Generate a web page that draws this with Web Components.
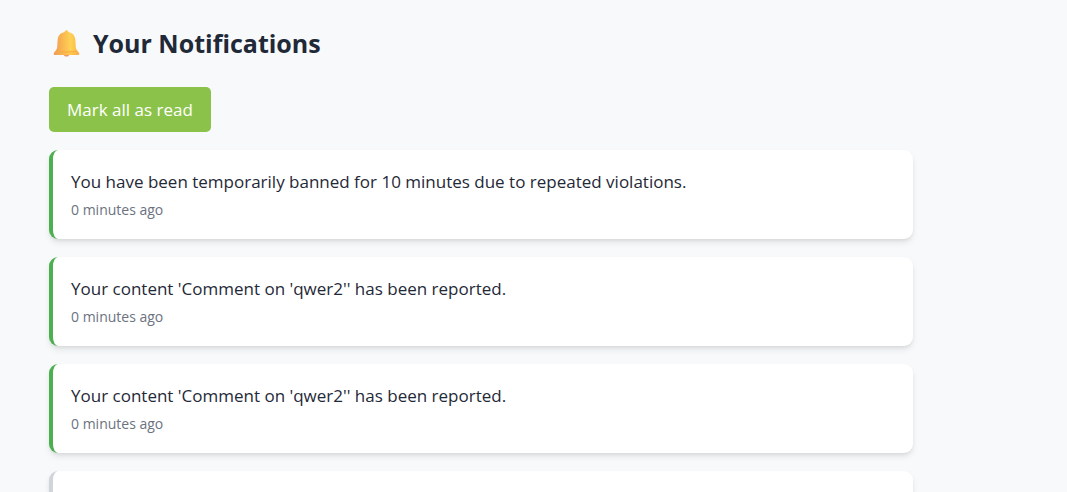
<!DOCTYPE html>
<html lang="en">
<head>
<meta charset="utf-8">
<meta name="viewport" content="width=device-width, initial-scale=1">
<title>Your Notifications</title>
<style>
  body { margin: 0; background: #f8f9fb; color: #1f2937; font-family: "Open Sans", "Noto Sans", sans-serif; font-size: 17px; }
</style>
</head>
<body>
<notifications-page>
  <page-title>Your Notifications</page-title>
  <action-button>Mark all as read</action-button>
  <notification-list>
    <notification-card unread time="0 minutes ago">You have been temporarily banned for 10 minutes due to repeated violations.</notification-card>
    <notification-card unread time="0 minutes ago">Your content 'Comment on 'qwer2'' has been reported.</notification-card>
    <notification-card unread time="0 minutes ago">Your content 'Comment on 'qwer2'' has been reported.</notification-card>
    <notification-card></notification-card>
  </notification-list>
</notifications-page>
<script>
  class ShadowElement extends HTMLElement {
    constructor() {
      super();
      this.attachShadow({ mode: "open" }).innerHTML = this.constructor.markup;
    }
  }

  customElements.define("notifications-page", class extends ShadowElement {
    static markup = `
      <style>
        :host { display: block; }
        main { display: flex; flex-direction: column; align-items: flex-start; gap: 18px; max-width: 864px; padding: 18px 49px; }
        ::slotted(notification-list) { align-self: stretch; }
      </style>
      <main><slot></slot></main>`;
  });

  customElements.define("page-title", class extends ShadowElement {
    static markup = `
      <style>
        :host { display: block; }
        h1 { display: flex; align-items: center; gap: 12px; margin: 0; padding: 0 0 0 4px; font-size: 25px; line-height: 51px; font-weight: 700; }
        svg { width: 28px; height: 28px; flex: none; }
      </style>
      <h1>
        <svg viewBox="0 0 28 28" aria-hidden="true">
          <defs>
            <linearGradient id="body" x1="0" x2="1" y1="0" y2="0">
              <stop offset="0" stop-color="#f09c55"/>
              <stop offset=".35" stop-color="#f9b950"/>
              <stop offset=".68" stop-color="#ffd155"/>
              <stop offset="1" stop-color="#f9ba45"/>
            </linearGradient>
            <linearGradient id="rim" x1="0" x2="1" y1="0" y2="0">
              <stop offset="0" stop-color="#f09c55"/>
              <stop offset=".65" stop-color="#ffc94c"/>
              <stop offset="1" stop-color="#f5ad4c"/>
            </linearGradient>
          </defs>
          <path d="M10.500 24h6c-.3 1.800-1.400 2.600-3 2.600s-2.700-.8-3-2.600z" fill="#ef9a6c"/>
          <path d="M13.500.2c1.100 0 1.800.7 1.800 1.800 4.500.8 6.800 4 7.100 8.400l.4 6.600c.2 2 1 3.100 2.200 4.600H2c1.200-1.500 2-2.600 2.200-4.600l.4-6.600C4.900 6 7.200 2.800 11.700 2c0-1.100.7-1.800 1.800-1.800z" fill="url(#body)"/>
          <path d="M2.900 20.800h21.200c1.200 1 2.200 2.100 2.200 3.200 0 .7-.6 1.100-1.500 1.100H2.200c-.9 0-1.500-.4-1.500-1.100 0-1.100 1-2.200 2.200-3.200z" fill="url(#rim)"/>
          <path d="M3.500 21.200c6 1 14 1 20 0" fill="none" stroke="#f5a83f" stroke-width=".8"/>
        </svg>
        <span><slot></slot></span>
      </h1>`;
  });

  customElements.define("action-button", class extends ShadowElement {
    static markup = `
      <style>
        :host { display: block; }
        button { margin: 0; padding: 9px 18px; border: 0; border-radius: 5px; background: #8bc34a; color: #fff; font: inherit; line-height: 27px; cursor: pointer; }
      </style>
      <button type="button"><slot></slot></button>`;
  });

  customElements.define("notification-list", class extends ShadowElement {
    static markup = `
      <style>
        :host { display: flex; flex-direction: column; gap: 18px; }
      </style>
      <slot></slot>`;
  });

  customElements.define("notification-card", class extends ShadowElement {
    static markup = `
      <style>
        :host { display: block; box-sizing: border-box; min-height: 89px; padding: 18px; border-left: 4px solid #d1d5db; border-radius: 9px; background: #fff; box-shadow: 0 4px 7px -1px rgb(0 0 0 / .1), 0 2px 4px -2px rgb(0 0 0 / .1); }
        :host([unread]) { border-left-color: #4caf50; }
        p { margin: 0; line-height: 27px; }
        time { display: block; margin-top: 4px; color: #6b7280; font-size: 14px; line-height: 22px; }
      </style>
      <p><slot></slot></p>
      <time></time>`;
    connectedCallback() {
      this.shadowRoot.querySelector("time").textContent = this.getAttribute("time") || "";
    }
  });
</script>
</body>
</html>
